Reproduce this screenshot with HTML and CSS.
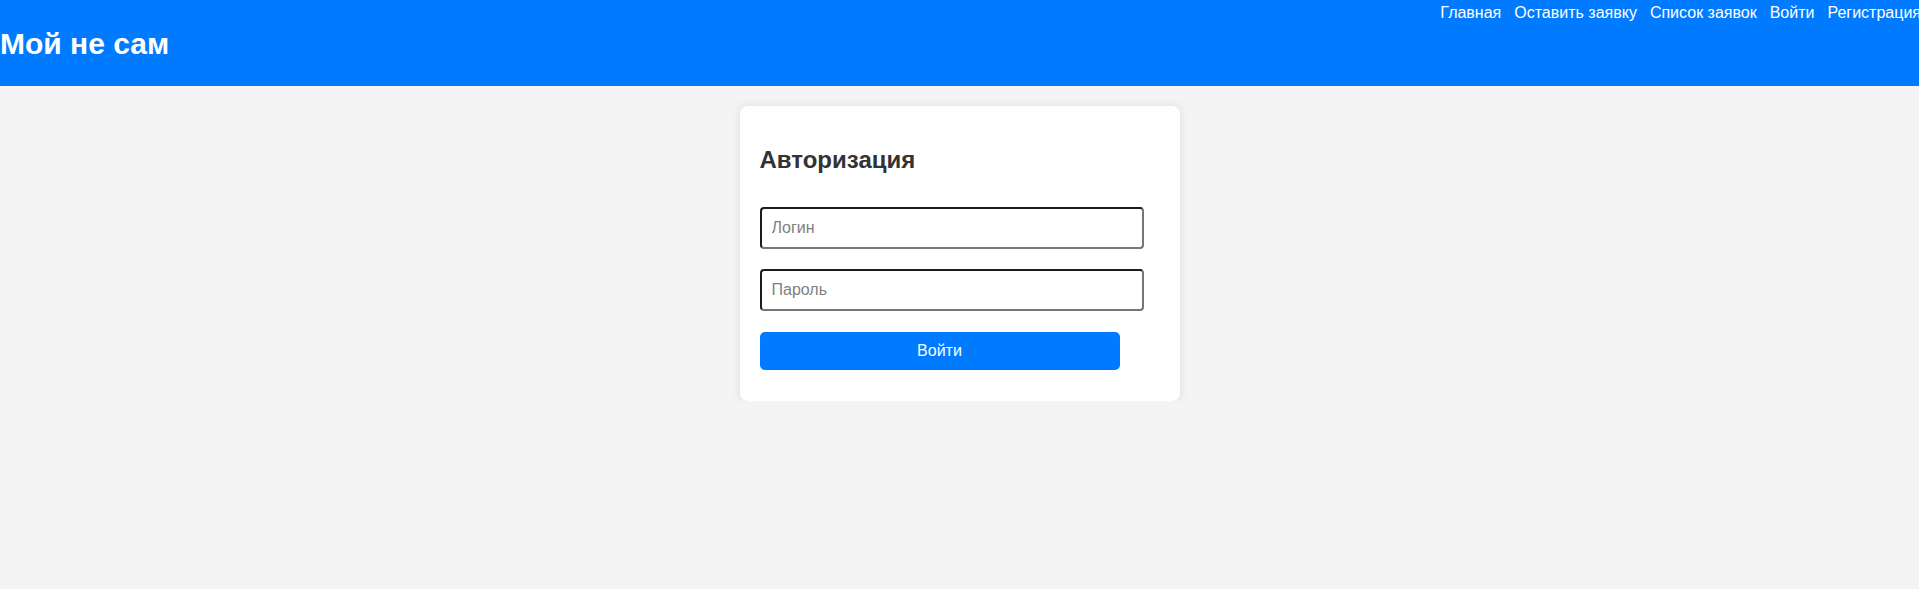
FILE: index.html
```html
<!DOCTYPE html>
<html lang="ru">
<head>
<meta charset="utf-8">
<title>Мой не сам</title>
<link rel="stylesheet" href="styles.css">
</head>
<body>
<header class="site-header">
  <h1 class="logo">Мой не сам</h1>
  <nav class="nav">
    <a href="#">Главная</a>
    <a href="#">Оставить заявку</a>
    <a href="#">Список заявок</a>
    <a href="#">Войти</a>
    <a href="#">Регистрация</a>
  </nav>
</header>
<main class="main">
  <div class="card">
    <h2 class="card-title">Авторизация</h2>
    <form class="form">
      <input class="field" type="text" placeholder="Логин">
      <input class="field" type="password" placeholder="Пароль">
      <button class="btn" type="button">Войти</button>
    </form>
  </div>
</main>
</body>
</html>
```
FILE: styles.css
```css
html, body {
  margin: 0;
  padding: 0;
}
body {
  background: #f4f4f4;
  font-family: "Liberation Sans", Arial, sans-serif;
  color: #333;
  overflow: hidden;
}
.site-header {
  background: #007bff;
  height: 86px;
  display: flex;
  justify-content: space-between;
  align-items: flex-start;
}
.logo {
  margin: 25px 0 0;
  font-size: 30px;
  font-weight: bold;
  color: #fff;
  line-height: 37px;
}
.nav {
  display: flex;
  gap: 13px;
  padding-top: 3px;
  margin-right: -2px;
}
.nav a {
  color: #fff;
  text-decoration: none;
  font-size: 16px;
  line-height: 20px;
}
.main {
  display: flex;
  justify-content: center;
  padding-top: 20px;
}
.card {
  width: 400px;
  padding: 20px 20px 31px;
  background: #fff;
  border-radius: 8px;
  box-shadow: 0 0 10px rgba(0, 0, 0, 0.1);
}
.card-title {
  margin: 20px 0 0;
  font-size: 24px;
  line-height: 28px;
  font-weight: bold;
  color: #333;
}
.form {
  display: flex;
  flex-direction: column;
  align-items: flex-start;
  margin-top: 33px;
  gap: 20px;
}
.field {
  box-sizing: border-box;
  width: 384px;
  height: 42px;
  padding: 10px;
  font-family: "Liberation Sans", Arial, sans-serif;
  font-size: 16px;
  border-width: 2px;
  border-style: solid;
  border-color: #1c1c1c #767676 #767676 #1c1c1c;
  border-radius: 4px;
  background: #fff;
  color: #333;
  outline: none;
}
.field::placeholder {
  color: #808080;
}
.btn {
  margin-top: 1px;
  width: 360px;
  height: 38px;
  padding: 10px;
  border: none;
  border-radius: 5px;
  background: #007bff;
  color: #fff;
  font-family: "Liberation Sans", Arial, sans-serif;
  font-size: 16px;
  cursor: pointer;
}
```
